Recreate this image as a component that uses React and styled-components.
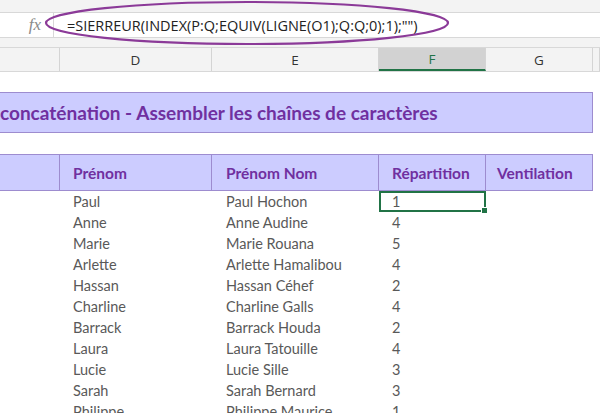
import React from 'react'
import styled, { createGlobalStyle } from 'styled-components'

const GlobalStyle = createGlobalStyle`
  html, body {
    margin: 0;
    padding: 0;
    background: #ffffff;
  }
`

// styling

const Page = styled.div`
  position: relative;
  width: 600px;
  height: 413px;
  overflow: hidden;
  background: #ffffff;
  font-family: 'Lato', 'Open Sans', sans-serif;
`

const TopStrip = styled.div`
  height: 12px;
  background: #f3f3f3;
  border-bottom: 1px solid #d8d8d8;
`

const FormulaBar = styled.div`
  display: flex;
  height: 24px;
  background: #ffffff;
  border-bottom: 1px solid #d8d8d8;
`

const FxBox = styled.div`
  width: 54px;
  display: flex;
  align-items: center;
  justify-content: flex-end;
  padding-right: 12px;
  box-sizing: border-box;
  border-right: 1px solid #d8d8d8;
  font-family: 'Liberation Serif', serif;
  font-style: italic;
  font-size: 17px;
  color: #8a8a8a;
`

const FormulaText = styled.div`
  flex: 1;
  display: flex;
  align-items: center;
  padding-left: 13px;
  font-family: 'Open Sans', 'Noto Sans', sans-serif;
  font-size: 14.5px;
  color: #222222;
  white-space: nowrap;
`

const Spacer = styled.div`
  height: 9px;
  background: #f3f3f3;
  border-bottom: 1px solid #d8d8d8;
`

const cols = '60px 152px 167px 107px 107px 1fr'

const ColHeaderRow = styled.div`
  display: grid;
  grid-template-columns: ${cols};
  height: 23px;
  background: #f3f3f3;
  border-bottom: 1px solid #d8d8d8;
`

const ColHeader = styled.div`
  display: flex;
  align-items: center;
  justify-content: center;
  box-sizing: border-box;
  border-right: 1px solid #d4d4d4;
  font-family: 'Open Sans', 'Noto Sans', sans-serif;
  font-size: 13.5px;
  color: ${(p) => (p.active ? '#217346' : '#333333')};
  background: ${(p) => (p.active ? '#d2d2d2' : 'transparent')};
  border-bottom: ${(p) => (p.active ? '2px solid #217346' : 'none')};
`

const Sheet = styled.div`
  display: grid;
  grid-template-columns: ${cols};
`

const BlankRow = styled.div`
  grid-column: 1 / -1;
  height: ${(p) => p.h}px;
`

const TitleBand = styled.div`
  grid-column: 1 / 6;
  height: 41px;
  box-sizing: border-box;
  background: #ccccff;
  border: 1px solid #9d8ccf;
  border-left: none;
  display: flex;
  align-items: center;
  font-weight: 700;
  font-size: 19px;
  color: #7030a0;
  white-space: nowrap;
  overflow: hidden;
`

const HeadCell = styled.div`
  height: 37px;
  box-sizing: border-box;
  background: #ccccff;
  border-top: 1px solid #9d8ccf;
  border-bottom: 1px solid #9d8ccf;
  border-right: 1px solid #9d8ccf;
  display: flex;
  align-items: center;
  padding-left: ${(p) => p.pad}px;
  font-weight: 700;
  font-size: 15.5px;
  color: #7030a0;
  white-space: nowrap;
`

const HeadGap = styled.div`
  height: 37px;
`

const Cell = styled.div`
  position: relative;
  height: 21px;
  box-sizing: border-box;
  display: flex;
  align-items: center;
  padding-left: ${(p) => p.pad}px;
  font-size: 14.5px;
  color: #595959;
  white-space: nowrap;
  border: ${(p) => (p.selected ? '2px solid #217346' : 'none')};

  &::after {
    content: '';
    display: ${(p) => (p.selected ? 'block' : 'none')};
    position: absolute;
    right: -4px;
    bottom: -4px;
    width: 5px;
    height: 5px;
    background: #217346;
    border: 1px solid #ffffff;
  }
`

const Oval = styled.svg`
  position: absolute;
  left: 0;
  top: 0;
  pointer-events: none;
`

// data

const people = [
  ['Paul', 'Paul Hochon', 1],
  ['Anne', 'Anne Audine', 4],
  ['Marie', 'Marie Rouana', 5],
  ['Arlette', 'Arlette Hamalibou', 4],
  ['Hassan', 'Hassan Céhef', 2],
  ['Charline', 'Charline Galls', 4],
  ['Barrack', 'Barrack Houda', 2],
  ['Laura', 'Laura Tatouille', 4],
  ['Lucie', 'Lucie Sille', 3],
  ['Sarah', 'Sarah Bernard', 3],
  ['Philippe', 'Philippe Maurice', 1],
]

const letters = ['', 'D', 'E', 'F', 'G', '']

// render

function DataRow({ row, first }) {
  return (
    <>
      <Cell />
      <Cell pad={13}>{row[0]}</Cell>
      <Cell pad={14}>{row[1]}</Cell>
      <Cell pad={first ? 11 : 13} selected={first}>
        {row[2]}
      </Cell>
      <Cell />
      <Cell />
    </>
  )
}

export default function App() {
  return (
    <Page>
      <GlobalStyle />
      <TopStrip />
      <FormulaBar>
        <FxBox>fx</FxBox>
        <FormulaText>=SIERREUR(INDEX(P:Q;EQUIV(LIGNE(O1);Q:Q;0);1);"")</FormulaText>
      </FormulaBar>
      <Spacer />
      <ColHeaderRow>
        {letters.map((l, i) => (
          <ColHeader key={i} active={l === 'F'}>
            {l}
          </ColHeader>
        ))}
      </ColHeaderRow>
      <Sheet>
        <BlankRow h={20} />
        <TitleBand>concaténation - Assembler les chaînes de caractères</TitleBand>
        <HeadGap />
        <BlankRow h={21} />
        <HeadCell pad={0} />
        <HeadCell pad={13}>Prénom</HeadCell>
        <HeadCell pad={14}>Prénom Nom</HeadCell>
        <HeadCell pad={13}>Répartition</HeadCell>
        <HeadCell pad={11}>Ventilation</HeadCell>
        <HeadGap />
        {people.map((row, i) => (
          <DataRow key={row[0]} row={row} first={i === 0} />
        ))}
      </Sheet>
      <Oval width="600" height="60" viewBox="0 0 600 60">
        <ellipse cx="247" cy="23" rx="201" ry="21" fill="none" stroke="#8b3a98" strokeWidth="2.2" />
      </Oval>
    </Page>
  )
}
